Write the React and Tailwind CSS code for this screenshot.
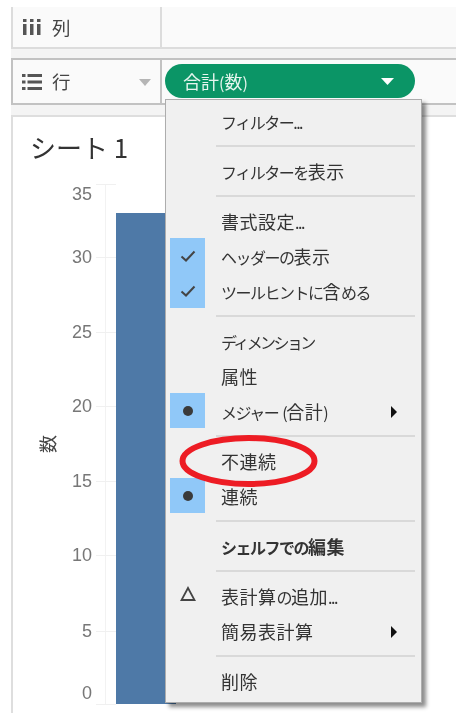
const Mixed = ({ text, tight }) =>
  text.split(/([\u4e00-\u9fff]+)/).filter(Boolean).map((part, i) =>
    /[\u4e00-\u9fff]/.test(part) ? (
      <span key={i} className="text-[18px] tracking-[0.5px]">{part}</span>
    ) : (
      <span key={i} className={`text-[16px] ${tight ? "tracking-[-2.6px]" : "tracking-[-1.5px]"}`}>{part}</span>
    )
  );

const Sep = () => (
  <div className="h-[15px] flex items-center pl-[50px] pr-[6px]">
    <div className="h-[2px] w-full bg-[#d9d9d9]" />
  </div>
);

const Check = () => (
  <svg width="18" height="14" viewBox="0 0 18 14" fill="none">
    <path d="M2.5 7.5 L7 11.5 L15.5 2.5" stroke="#444" strokeWidth="2" />
  </svg>
);

const Dot = () => <div className="w-[10px] h-[10px] rounded-full bg-[#3a3a3a]" />;

const Delta = () => (
  <svg width="16" height="16" viewBox="0 0 16 16" fill="none" className="-mt-[3px]">
    <path d="M8 2 L14.5 14 L1.5 14 Z" stroke="#444" strokeWidth="1.8" />
  </svg>
);

const Item = ({ mark, active, bold, sub, text, tight }) => (
  <div className="h-[35px] flex items-center">
    <div className={`w-[35px] h-[35px] ml-[4px] flex items-center justify-center ${active ? "bg-[#90c8f8]" : ""}`}>
      {mark}
    </div>
    <div className={`ml-[16px] pt-[2px] flex-1 leading-[32px] whitespace-nowrap text-[#333] ${bold ? "font-bold" : ""}`}>
      <Mixed text={text} tight={tight} />
    </div>
    {sub && (
      <svg width="8" height="12" viewBox="0 0 8 12" className="mr-[23px] mt-[2px]">
        <path d="M1 0 L7 6 L1 12 Z" fill="#111" />
      </svg>
    )}
  </div>
);

const Chart = () => {
  const ticks = [
    ["35", 200, 184],
    ["30", 263, 257],
    ["25", 338, 332],
    ["20", 412, 406],
    ["15", 487, 481],
    ["10", 561, 555],
    ["5", 637, 631],
    ["0", 699, 704],
  ];
  return (
    <svg width="443" height="596" viewBox="13 117 443 596" className="absolute left-0 top-0">
      <line x1="105.5" y1="184" x2="105.5" y2="704" stroke="#f2f2f2" />
      {ticks.map(([label, ty, ly]) => (
        <g key={label}>
          <line x1="96" y1={ly + 0.5} x2="116" y2={ly + 0.5} stroke="#f0f0f0" />
          <text
            x="92"
            y={ty}
            textAnchor="end"
            fontSize="18"
            fill="#777"
            fontFamily="'Liberation Sans', Arial, sans-serif"
          >
            {label}
          </text>
        </g>
      ))}
      <rect x="116" y="213" width="60" height="491" fill="#4e79a7" />
      <text
        x="0"
        y="0"
        fontSize="18"
        fill="#444"
        textAnchor="middle"
        transform="translate(55 444) rotate(-90)"
      >
        数
      </text>
    </svg>
  );
};

export default function App() {
  return (
    <div className="relative w-[456px] h-[721px] overflow-hidden bg-white pt-[7px] pl-[11px] font-['Noto_Sans_CJK_JP','Noto_Sans_CJK_SC',sans-serif] blur-[0.35px]">
      {/* Columns shelf */}
      <div className="h-[40px] flex bg-[#fafafa] border-l-2 border-b-2 border-[#dcdcdc] box-content">
        <div className="w-[149px] h-full border-r-2 border-[#dcdcdc] flex items-center pl-[10px]">
          <svg width="18" height="16" viewBox="0 0 18 16">
            <rect x="0" y="0" width="3.5" height="3" fill="#555" />
            <rect x="7" y="0" width="3.5" height="3" fill="#555" />
            <rect x="14" y="0" width="3.5" height="3" fill="#555" />
            <rect x="0" y="5" width="3.5" height="11" fill="#555" />
            <rect x="7" y="5" width="3.5" height="11" fill="#555" />
            <rect x="14" y="5" width="3.5" height="11" fill="#555" />
          </svg>
          <span className="ml-[11px] text-[18.5px] leading-none text-[#444]">列</span>
        </div>
      </div>

      {/* Gap */}
      <div className="h-[9px] bg-[#f4f4f4]" />

      {/* Rows shelf */}
      <div className="h-[47px] flex bg-[#fafafa] border-t-2 border-b-2 border-l-2 border-[#c2c2c2]">
        <div className="w-[149px] h-full border-r-2 border-[#c2c2c2] flex items-center pl-[9px]">
          <svg width="20" height="16" viewBox="0 0 20 16">
            <rect x="0" y="0" width="3.5" height="3" fill="#555" />
            <rect x="5.5" y="0" width="14.5" height="3" fill="#555" />
            <rect x="0" y="6.5" width="3.5" height="3" fill="#555" />
            <rect x="5.5" y="6.5" width="14.5" height="3" fill="#555" />
            <rect x="0" y="13" width="3.5" height="3" fill="#555" />
            <rect x="5.5" y="13" width="14.5" height="3" fill="#555" />
          </svg>
          <span className="ml-[10px] text-[18.5px] leading-none text-[#444]">行</span>
          <svg width="12" height="7" viewBox="0 0 12 7" className="ml-[68px] mt-[1px]">
            <path d="M0 0 H12 L6 7 Z" fill="#b5b5b5" />
          </svg>
        </div>
        <div className="ml-[3px] mt-[4px] w-[250px] h-[34px] rounded-full bg-[#0b9566] flex items-center pl-[18px] pr-[21px] justify-between">
          <span className="leading-none text-[#e6f5ee] whitespace-nowrap">
            <span className="text-[18px]">合計</span>
            <span className="text-[16px]">(</span>
            <span className="text-[18px]">数</span>
            <span className="text-[16px]">)</span>
          </span>
          <svg width="13" height="7" viewBox="0 0 13 7">
            <path d="M0 0 H13 L6.5 7 Z" fill="#fff" />
          </svg>
        </div>
      </div>

      {/* Gap */}
      <div className="h-[10px] bg-[#f4f4f4]" />

      {/* Sheet */}
      <div className="relative h-[598px] bg-white border-l-2 border-t-2 border-[#dedede]">
        <Chart />
        <div className="relative pl-[17px] pt-[11px] text-[26px] leading-[38px] text-[#333]">シート 1</div>
      </div>

      {/* Context menu */}
      <div className="absolute left-[165px] top-[99px] w-[257px] h-[604px] py-[3px] bg-[#f0f0f0] border border-[#adadad] shadow-[4px_4px_4px_rgba(0,0,0,0.45)]">
        <Item text="フィルター..." />
        <Sep />
        <Item text="フィルターを表示" />
        <Sep />
        <Item text="書式設定..." />
        <Item active mark={<Check />} text="ヘッダーの表示" />
        <Item active mark={<Check />} text="ツールヒントに含める" />
        <Sep />
        <Item tight text="ディメンション" />
        <Item text="属性" />
        <Item active sub mark={<Dot />} text={"メジャー\u00a0\u00a0(合計)"} />
        <Sep />
        <Item text="不連続" />
        <Item active mark={<Dot />} text="連続" />
        <Sep />
        <Item bold text="シェルフでの編集" />
        <Sep />
        <Item mark={<Delta />} text="表計算の追加..." />
        <Item sub text="簡易表計算" />
        <Sep />
        <Item text="削除" />
      </div>

      {/* Red hand-drawn annotation */}
      <svg width="150" height="60" viewBox="0 0 150 60" className="absolute left-[174px] top-[431px]" fill="none">
        <ellipse cx="74.5" cy="30" rx="66" ry="23" stroke="#ed1c24" strokeWidth="6" />
      </svg>
    </div>
  );
}
